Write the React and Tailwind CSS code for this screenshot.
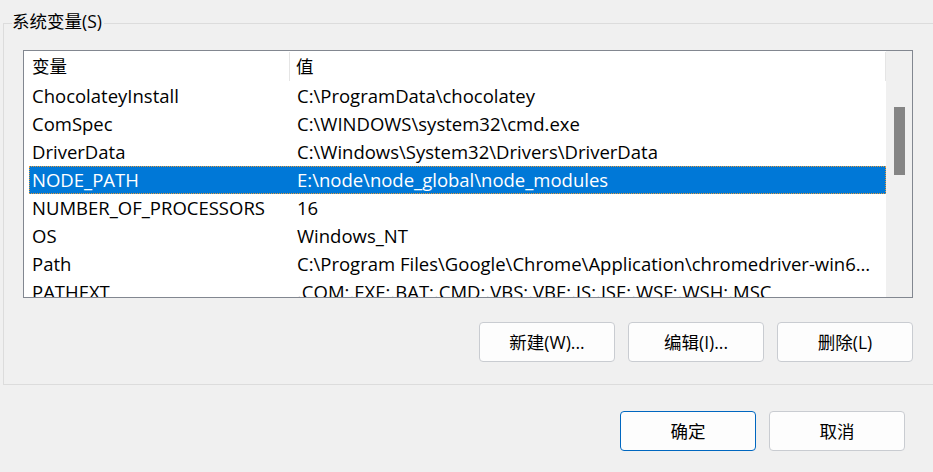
import React from "react";

const rows = [
  ["ChocolateyInstall", "C:\\ProgramData\\chocolatey"],
  ["ComSpec", "C:\\WINDOWS\\system32\\cmd.exe"],
  ["DriverData", "C:\\Windows\\System32\\Drivers\\DriverData"],
  ["NODE_PATH", "E:\\node\\node_global\\node_modules", true],
  ["NUMBER_OF_PROCESSORS", "16"],
  ["OS", "Windows_NT"],
  ["Path", "C:\\Program Files\\Google\\Chrome\\Application\\chromedriver-win64\\chromedriver.exe;C:\\Windows"],
  ["PATHEXT", ".COM;.EXE;.BAT;.CMD;.VBS;.VBE;.JS;.JSE;.WSF;.WSH;.MSC"],
];

const font = {
  fontFamily: '"Open Sans", "Noto Sans CJK SC", sans-serif',
};

function Btn({ children, primary }) {
  return (
    <div
      className={
        "w-[136px] h-[40px] rounded-[4px] flex items-center justify-center text-[17.5px] text-black bg-[#fdfdfd] border " +
        (primary ? "border-[#0067c0]" : "border-[#c9ccd1]")
      }
    >
      {children}
    </div>
  );
}

export default function App() {
  return (
    <div
      className="w-[933px] h-[472px] bg-[#f0f0f0] overflow-hidden text-black"
      style={font}
    >
      <div className="mt-[23px] ml-[3px] h-[362px] border-l border-t border-b border-[#dcdcdc] relative pl-[19px] pr-[20px] pt-[26px]">
        <div className="absolute left-[8px] top-[-15px] h-[24px] leading-[24px] text-[17.5px] bg-[#f0f0f0] pr-[2px]">
          系统变量(S)
        </div>
        <div className="h-[248px] border border-[#828790] bg-white flex overflow-hidden">
          <div className="w-[862px] flex-shrink-0 flex flex-col overflow-hidden">
            <div className="h-[31px] flex-shrink-0 flex text-[17.5px]">
              <div className="w-[266px] pl-[8px] flex items-center border-r border-[#e5e5e5] my-[1px]">
                变量
              </div>
              <div className="flex-1 pl-[6px] flex items-center border-r border-[#e5e5e5] my-[1px]">
                值
              </div>
            </div>
            {rows.map(([k, v, sel]) => (
              <div
                key={k}
                className={
                  "h-[28px] flex-shrink-0 ml-[5px] flex items-center text-[18.5px] " +
                  (sel
                    ? "bg-[#0078d7] text-white outline outline-1 outline-dotted outline-[#e39a3c] -outline-offset-1"
                    : "")
                }
              >
                <div className="w-[261px] flex-shrink-0 pl-[3px] whitespace-nowrap">{k}</div>
                <div className="flex-1 min-w-0 pl-[7px] pr-[12px] whitespace-nowrap overflow-hidden text-ellipsis">
                  {v}
                </div>
              </div>
            ))}
          </div>
          <div className="w-[27px] flex-shrink-0 bg-[#f0f0f0]">
            <div className="ml-[8px] mt-[56px] w-[11px] h-[68px] bg-[#858585]" />
          </div>
        </div>
        <div className="mt-[24px] flex justify-end gap-[13px]">
          <Btn>新建(W)...</Btn>
          <Btn>编辑(I)...</Btn>
          <Btn>删除(L)</Btn>
        </div>
      </div>
      <div className="mt-[26px] flex justify-end gap-[13px] pr-[28px]">
        <Btn primary>确定</Btn>
        <Btn>取消</Btn>
      </div>
    </div>
  );
}
